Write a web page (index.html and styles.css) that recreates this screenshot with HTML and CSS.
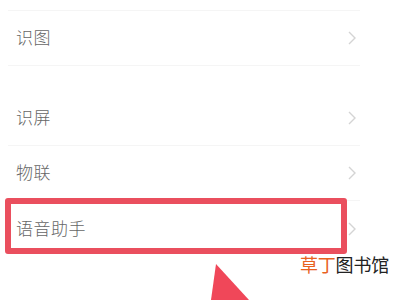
FILE: index.html
```html
<!DOCTYPE html>
<html lang="zh">
<head>
<meta charset="utf-8">
<link rel="stylesheet" href="styles.css">
</head>
<body>
<div class="page">
  <div class="group first">
    <div class="row"><span class="label">识图</span><svg class="chev" viewBox="0 0 8 14" width="8" height="14"><polyline points="1,1 7,7 1,13"/></svg></div>
  </div>
  <div class="group">
    <div class="row"><span class="label">识屏</span><svg class="chev" viewBox="0 0 8 14" width="8" height="14"><polyline points="1,1 7,7 1,13"/></svg></div>
    <div class="row"><span class="label">物联</span><svg class="chev" viewBox="0 0 8 14" width="8" height="14"><polyline points="1,1 7,7 1,13"/></svg></div>
    <div class="row last"><span class="label">语音助手</span><svg class="chev" viewBox="0 0 8 14" width="8" height="14"><polyline points="1,1 7,7 1,13"/></svg></div>
  </div>
  <div class="highlight"></div>
  <svg class="arrow" viewBox="0 0 400 300" width="400" height="300"><polygon points="216,264 211,300 249,300"/></svg>
  <div class="watermark"><span class="wm-orange">草丁</span>图书馆</div>
</div>
</body>
</html>
```
FILE: styles.css
```css
html, body {
  margin: 0;
  padding: 0;
  background: #fff;
}
.page {
  position: relative;
  width: 400px;
  height: 300px;
  overflow: hidden;
  padding-top: 10px;
  box-sizing: border-box;
  font-family: "Noto Sans CJK SC", "Noto Sans", sans-serif;
}
.group {
  margin-left: 8px;
  width: 352px;
}
.group.first {
  border-top: 1px solid #f5f5f5;
  border-bottom: 1px solid #f5f5f5;
  margin-bottom: 25px;
}
.row {
  height: 55px;
  display: flex;
  align-items: center;
  justify-content: space-between;
  padding: 0 4px 3px 8px;
  box-sizing: border-box;
  border-bottom: 1px solid #f5f5f5;
}
.group.first .row { border-bottom: none; height: 54px; }
.row.last { border-bottom: none; }
.label {
  font-size: 17px;
  font-weight: 300;
  color: #666;
  letter-spacing: 0.5px;
}
.chev {
  margin-top: 3px;
}
.chev polyline {
  fill: none;
  stroke: #d4d4d4;
  stroke-width: 1.4;
}
.highlight {
  position: absolute;
  left: 5px;
  top: 198px;
  width: 342px;
  height: 56px;
  border: 6px solid #ea4f5e;
  border-radius: 3px;
  box-sizing: border-box;
}
.arrow {
  position: absolute;
  left: 0;
  top: 0;
}
.arrow polygon { fill: #f04759; }
.watermark {
  position: absolute;
  left: 300px;
  top: 252px;
  font-size: 18px;
  line-height: 24px;
  color: #222;
  letter-spacing: -0.2px;
}
.wm-orange { color: #e8621f; }
```
